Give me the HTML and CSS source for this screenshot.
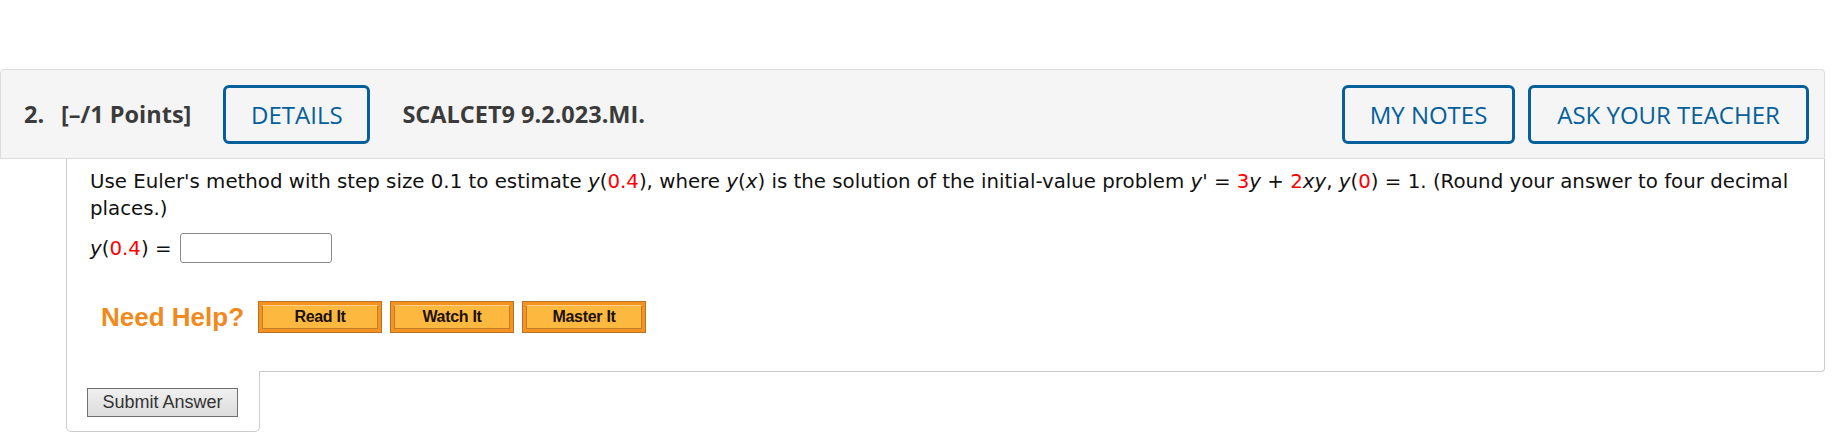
FILE: index.html
```html
<!DOCTYPE html>
<html>
<head>
<meta charset="utf-8">
<link rel="stylesheet" href="styles.css">
</head>
<body>
<div class="page">
  <div class="qhead">
    <span class="qnum">2.</span>
    <span class="qpts">[–/1 Points]</span>
    <button class="obtn details">DETAILS</button>
    <span class="qref">SCALCET9 9.2.023.MI.</span>
    <div class="qright">
      <button class="obtn notes">MY NOTES</button>
      <button class="obtn ask">ASK YOUR TEACHER</button>
    </div>
  </div>
  <div class="qbody">
    <p class="qtext">Use Euler's method with step size 0.1 to estimate <i>y</i>(<span class="red">0.4</span>), where <i>y</i>(<i>x</i>) is the solution of the initial-value problem <i>y'</i> = <span class="red">3</span><i>y</i> + <span class="red">2</span><i>xy</i>, <i>y</i>(<span class="red">0</span>) = 1. (Round your answer to four decimal places.)</p>
    <div class="answer">
      <span><i>y</i>(<span class="red">0.4</span>) =</span>
      <input class="ans" type="text">
    </div>
    <div class="help">
      <span class="needhelp">Need Help?</span>
      <button class="hbtn"><span>Read It</span></button>
      <button class="hbtn"><span>Watch It</span></button>
      <button class="hbtn"><span>Master It</span></button>
    </div>
  </div>
  <div class="submitbox">
    <button class="submit">Submit Answer</button>
  </div>
</div>
</body>
</html>
```

FILE: styles.css
```css
html, body {
  margin: 0;
  padding: 0;
  background: #fff;
}

.page {
  width: 1825px;
  padding-top: 69px;
}

.qhead {
  box-sizing: border-box;
  height: 90px;
  background: #f5f5f5;
  border: 1px solid #dcdcdc;
  border-radius: 4px 4px 0 0;
  display: flex;
  align-items: center;
  padding: 0 15px 0 23px;
  font-family: "Open Sans", sans-serif;
  color: #3b3b3b;
}

.qnum {
  font-weight: 700;
  font-size: 23.5px;
  width: 37px;
}

.qpts {
  font-weight: 700;
  font-size: 23.5px;
  margin-right: 32px;
}

.qref {
  font-weight: 700;
  font-size: 23.5px;
  margin-left: 32px;
}

.obtn {
  box-sizing: border-box;
  height: 59px;
  border: 3px solid #04609a;
  border-radius: 6px;
  background: transparent;
  color: #04609a;
  font-family: "Open Sans", sans-serif;
  font-size: 24px;
  padding: 0;
  display: flex;
  align-items: center;
  justify-content: center;
}

.details { width: 147px; }
.notes { width: 173px; }
.ask { width: 281px; }

.qright {
  margin-left: auto;
  display: flex;
  gap: 13px;
}

.qbody {
  margin-left: 66px;
  border: 1px solid #cccccc;
  border-top: none;
  border-radius: 0 0 4px 0;
  padding: 9px 12px 38px 23px;
  font-family: "DejaVu Sans", Verdana, sans-serif;
  font-size: 19.8px;
  color: #111;
}

.qtext {
  margin: 0;
  line-height: 27px;
}

.red { color: #ff0000; }

.answer {
  display: flex;
  align-items: center;
  gap: 8px;
  margin-top: 11px;
}

.ans {
  box-sizing: border-box;
  width: 152px;
  height: 30px;
  border: 1px solid #8a8a8a;
  border-radius: 3px;
  margin: 0;
}

.help {
  display: flex;
  align-items: center;
  gap: 8px;
  margin-top: 38px;
  padding-left: 11px;
}

.needhelp {
  font-family: "Liberation Sans", Arial, sans-serif;
  font-weight: 700;
  font-size: 26px;
  color: #f08a1c;
  margin-right: 6px;
}

.hbtn {
  box-sizing: border-box;
  width: 124px;
  height: 32px;
  padding: 3px;
  border: 1px solid #b9712a;
  background: #f5931f;
  margin: 0;
  display: flex;
}

.hbtn span {
  box-sizing: border-box;
  flex: 1;
  display: flex;
  align-items: center;
  justify-content: center;
  border: 1px solid #c47b2e;
  border-top-color: #fcd08a;
  background: #fdb83f;
  font-family: "Liberation Sans", Arial, sans-serif;
  font-weight: 700;
  font-size: 16px;
  letter-spacing: -0.3px;
  color: #1a1208;
}

.submitbox {
  box-sizing: border-box;
  width: 194px;
  margin-left: 66px;
  margin-top: -1px;
  background: #fff;
  border: 1px solid #cccccc;
  border-top: none;
  border-radius: 0 0 5px 5px;
  padding: 17px 0 14px 20px;
}

.submit {
  box-sizing: border-box;
  width: 151px;
  height: 29px;
  border: 1px solid #707070;
  background: linear-gradient(#f0f0f0, #dcdcdc);
  font-family: "Liberation Sans", Arial, sans-serif;
  font-size: 18px;
  color: #333;
  padding: 0;
  margin: 0;
}
```
